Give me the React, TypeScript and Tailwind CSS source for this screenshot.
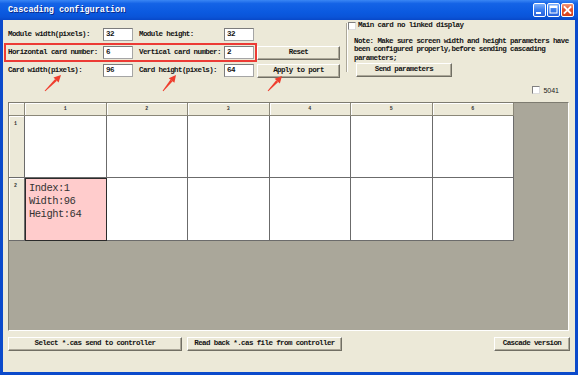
import React from 'react'

const mono = "font-['Liberation_Mono',monospace]"

function Arrow({ x1, y1, x2, y2 }: { x1: number; y1: number; x2: number; y2: number }) {
  const dx = x2 - x1
  const dy = y2 - y1
  const len = Math.hypot(dx, dy)
  const ux = dx / len
  const uy = dy / len
  const px = -uy
  const py = ux
  const bx = x2 - ux * 7
  const by = y2 - uy * 7
  const shaft = `${x1 + px * 0.5},${y1 + py * 0.5} ${bx + px * 1.3},${by + py * 1.3} ${bx - px * 1.3},${by - py * 1.3} ${x1 - px * 0.5},${y1 - py * 0.5}`
  const head = `${x2},${y2} ${bx + px * 3.6},${by + py * 3.6} ${bx - px * 3.6},${by - py * 3.6}`
  return (
    <>
      <polygon points={shaft} fill="#ef3d2d" />
      <polygon points={head} fill="#ef3d2d" />
    </>
  )
}

function Label({ w, ml, children }: { w: number; ml?: boolean; children: React.ReactNode }) {
  return (
    <span
      className={`${mono} text-[7.5px] leading-none font-bold tracking-[-0.6px] text-[#141414] whitespace-nowrap ${ml ? 'ml-[6px]' : ''}`}
      style={{ width: w }}
    >
      {children}
    </span>
  )
}

function Input({ value }: { value: string }) {
  return (
    <div
      className={`${mono} w-[30px] h-[13px] bg-white border border-[#a5a5a5] border-t-[#7c7c7c] border-l-[#7c7c7c] flex items-center pl-[2px] text-[7.5px] font-bold tracking-[-0.6px] text-[#141414] leading-none`}
    >
      {value}
    </div>
  )
}

function Button({ w, children, className = '' }: { w: number; children: React.ReactNode; className?: string }) {
  return (
    <div
      className={`${mono} h-[14px] bg-[#ece9d8] border border-t-white border-l-white border-r-[#716f64] border-b-[#716f64] shadow-[inset_-1px_-1px_0_#aca899] flex items-center justify-center text-[7.5px] font-bold tracking-[-0.6px] text-[#141414] leading-none whitespace-nowrap ${className}`}
      style={{ width: w }}
    >
      {children}
    </div>
  )
}

function Check() {
  return <div className="w-[8px] h-[8px] bg-white border border-t-[#808080] border-l-[#808080] border-r-[#dcdcdc] border-b-[#dcdcdc] shrink-0" />
}

function TitleButton({ kind }: { kind: 'min' | 'max' | 'close' }) {
  const bg =
    kind === 'close'
      ? 'bg-[linear-gradient(180deg,#f29a7c_0%,#e5532f_45%,#d4401c_100%)]'
      : 'bg-[linear-gradient(180deg,#7fb0fb_0%,#3b7ff0_45%,#2a62dc_100%)]'
  return (
    <div className={`w-[13px] h-[14px] rounded-[2px] border border-white ${bg} flex items-center justify-center`}>
      <svg width="11" height="12" viewBox="0 0 11 12">
        {kind === 'min' && <rect x="2" y="8" width="5" height="2" fill="white" />}
        {kind === 'max' && (
          <>
            <rect x="2" y="2" width="7" height="7" fill="none" stroke="white" strokeWidth="1" />
            <rect x="2" y="2" width="7" height="2" fill="white" />
          </>
        )}
        {kind === 'close' && (
          <path d="M2.5 3 L8.5 9 M8.5 3 L2.5 9" stroke="white" strokeWidth="1.8" strokeLinecap="square" />
        )}
      </svg>
    </div>
  )
}

const cols = [1, 2, 3, 4, 5, 6]

export default function App() {
  return (
    <div className="relative w-[578px] h-[375px] bg-[#0b4acb] flex flex-col overflow-hidden">
      <div className="h-[20px] shrink-0 flex items-center pl-[8px] pr-[4px] bg-[linear-gradient(180deg,#3a86f4_0%,#1463e6_18%,#0b5ae0_60%,#0a54d8_85%,#0848c8_100%)]">
        <span className={`${mono} text-[8.5px] font-bold text-white leading-none [text-shadow:1px_1px_0_#0a2a8a]`}>
          Cascading configuration
        </span>
        <div className="ml-auto flex gap-[1px]">
          <TitleButton kind="min" />
          <TitleButton kind="max" />
          <TitleButton kind="close" />
        </div>
      </div>

      <div className="mx-[3px] h-[352px] shrink-0 bg-[#ece9d8] flex flex-col">
        <div className="flex">
          <div className="w-[343px] shrink-0 flex flex-col pt-[6px] pl-[1px]">
            <div className="h-[17px] flex items-center">
              <div className="h-full flex items-center border-2 border-transparent pl-[2px] pr-[1px]">
                <Label w={95}>Module width(pixels):</Label>
                <Input value="32" />
                <Label w={85} ml>Module height:</Label>
                <Input value="32" />
              </div>
            </div>
            <div className="h-[19px] flex items-center">
              <div className="h-full flex items-center border-2 border-[#ec3b35] pl-[2px] pr-[1px]">
                <Label w={95}>Horizontal card number:</Label>
                <Input value="6" />
                <Label w={85} ml>Vertical card number:</Label>
                <Input value="2" />
              </div>
              <Button w={83}>Reset</Button>
            </div>
            <div className="h-[17px] flex items-center">
              <div className="h-full flex items-center border-2 border-transparent pl-[2px] pr-[1px]">
                <Label w={95}>Card width(pixels):</Label>
                <Input value="96" />
                <Label w={85} ml>Card height(pixels):</Label>
                <Input value="64" />
              </div>
              <Button w={83}>Apply to port</Button>
            </div>
          </div>

          <div className="w-[2px] h-[49px] mt-[3px] border-l border-l-[#aca899] border-r border-r-white shrink-0" />

          <div className="flex flex-col pt-[2px]">
            <div className="h-[8px] flex items-center gap-[2px]">
              <Check />
              <span className={`${mono} text-[7.5px] font-bold tracking-[-0.6px] text-[#141414] leading-none whitespace-nowrap`}>
                Main card no linked display
              </span>
            </div>
            <div className={`${mono} mt-[7px] pl-[6px] text-[7.5px] font-bold tracking-[-0.6px] text-[#141414] leading-[8.3px] whitespace-nowrap`}>
              <div>Note: Make sure screen width and height parameters have</div>
              <div>been configured properly,before sending cascading</div>
              <div>parameters;</div>
            </div>
            <Button w={96} className="mt-[1px] ml-[8px]">
              Send parameters
            </Button>
          </div>
        </div>

        <div className="mt-[7px] h-[8px] flex items-center justify-end pr-[16px] gap-[3px]">
          <Check />
          <span className="font-['Liberation_Sans',sans-serif] text-[7px] leading-none text-[#222]">5041</span>
        </div>

        <div className="mt-[8px] ml-[5px] w-[561px] h-[229px] bg-[#aaa79a] border border-t-[#7d7b70] border-l-[#7d7b70] border-r-white border-b-white">
          <div className="grid grid-cols-[16px_repeat(6,81.5px)] grid-rows-[13px_62px_63px] w-max">
            <div className="bg-[#ece9d8] border-r border-b border-[#8a8778] shadow-[inset_1px_1px_0_#fff]" />
            {cols.map((c) => (
              <div
                key={c}
                className={`${mono} bg-[#ece9d8] border-r border-b border-[#8a8778] shadow-[inset_1px_1px_0_#fff] flex items-center justify-center text-[5px] font-bold text-[#333] leading-none`}
              >
                {c}
              </div>
            ))}

            <div className={`${mono} bg-[#ece9d8] border-r border-b border-[#6b6b6b] shadow-[inset_1px_1px_0_#fff] pt-[6px] pl-[5px] text-[5px] font-bold text-[#333] leading-none`}>
              1
            </div>
            {cols.map((c) => (
              <div key={c} className="bg-white border-r border-b border-[#6b6b6b]" />
            ))}

            <div className={`${mono} bg-[#ece9d8] border-r border-b border-[#6b6b6b] shadow-[inset_1px_1px_0_#fff] pt-[6px] pl-[5px] text-[5px] font-bold text-[#333] leading-none`}>
              2
            </div>
            <div className={`${mono} bg-[#ffcccc] border-r border-b border-[#2b2b2b] shadow-[inset_1px_1px_0_#2b2b2b] pl-[4px] pt-[4px] text-[10.5px] leading-[13px] tracking-[-0.5px] text-[#333] whitespace-nowrap`}>
              <div>Index:1</div>
              <div>Width:96</div>
              <div>Height:64</div>
            </div>
            {cols.slice(1).map((c) => (
              <div key={c} className="bg-white border-r border-b border-[#6b6b6b]" />
            ))}
          </div>
        </div>

        <div className="mt-[6px] flex px-[5px]">
          <Button w={174}>Select *.cas send to controller</Button>
          <Button w={155} className="ml-[5px]">
            Read back *.cas file from controller
          </Button>
          <Button w={76} className="ml-auto">
            Cascade version
          </Button>
        </div>
      </div>

      <svg className="absolute left-0 top-0 pointer-events-none" width="578" height="375" viewBox="0 0 578 375">
        <Arrow x1={45} y1={91} x2={61} y2={75} />
        <Arrow x1={163} y1={91} x2={176} y2={75} />
        <Arrow x1={268} y1={91} x2={282} y2={76} />
      </svg>
    </div>
  )
}
